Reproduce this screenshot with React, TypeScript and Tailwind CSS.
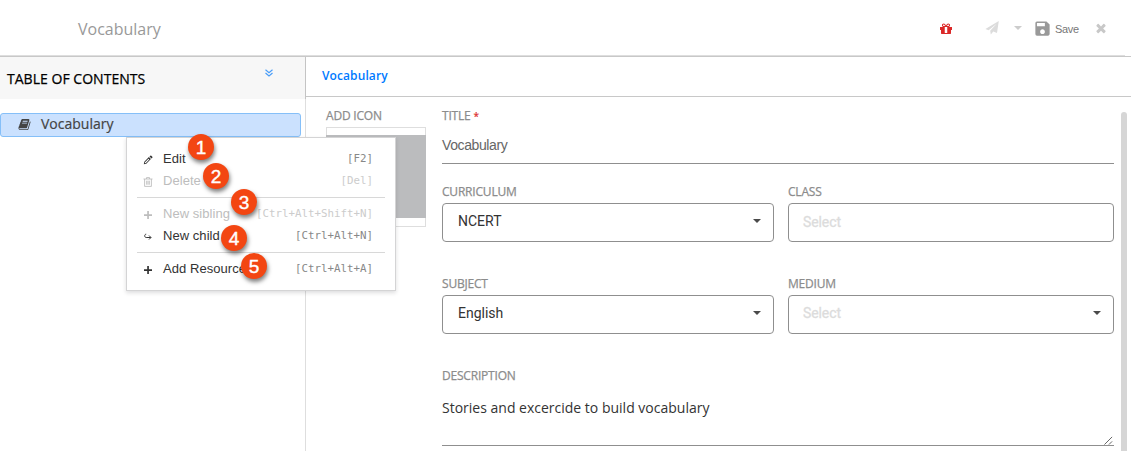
import type { ReactNode } from 'react';
import { MdSave } from 'react-icons/md';

const BOOK =
  'M1703 478q40 57 18 129l-275 906q-19 64-76.5 107.5t-122.500 43.500h-923q-77 0-148.500-53.500t-99.500-131.500q-24-67-2-127 0-4 3-27t4-37q1-8-3-21.500t-3-19.500q2-11 8-21t16.500-23.500 16.500-23.500q23-38 45-91.500t30-91.500q3-10 .5-30t-.5-28q3-11 17-28t17-23q21-36 42-92t25-90q1-9-2.500-32t.5-28q4-13 22-30.500t22-22.500q19-26 42.500-84.500t27.500-96.500q1-8-3-25.500t-2-26.500q2-8 9-18t18-23 17-21q8-12 16.500-30.500t15-35 16-36 19.500-32 26.500-23.500 36-11.500 47.500 5.500l-1 3q38-9 51-9h761q74 0 114 56t18 130l-274 906q-36 119-71.500 153.500t-128.500 34.500h-869q-27 0-38 15-11 16-1 43 24 70 144 70h923q29 0 56-15.500t35-41.500l300-987q7-22 5-57 38 15 59 43zm-1064 2q-4 13 2 22.500t20 9.500h608q13 0 25.500-9.500t16.500-22.500l21-64q4-13-2-22.500t-20-9.500h-608q-13 0-25.500 9.500t-16.500 22.500zm-83 256q-4 13 2 22.500t20 9.500h608q13 0 25.500-9.500t16.500-22.500l21-64q4-13-2-22.500t-20-9.500h-608q-13 0-25.500 9.500t-16.500 22.500z';
const GIFT =
  'M1056 1356v-716h-320v716q0 25 18 38.500t46 13.500h192q28 0 46-13.500t18-38.500zm-456-844h195l-126-161q-26-31-69-31-40 0-68 28t-28 68 28 68 68 28zm688-96q0-40-28-68t-68-28q-43 0-69 31l-125 161h194q40 0 68-28t28-68zm376 256v320q0 14-9 23t-23 9h-96v416q0 40-28 68t-68 28h-1088q-40 0-68-28t-28-68v-416h-96q-14 0-23-9t-9-23v-320q0-14 9-23t23-9h440q-93 0-158.500-65.500t-65.500-158.500 65.500-158.500 158.500-65.500q107 0 168 77l128 165 128-165q61-77 168-77 93 0 158.500 65.500t65.500 158.500-65.500 158.500-158.500 65.500h440q14 0 23 9t9 23z';
const CLOSE =
  'M1490 1322q0 40-28 68l-136 136q-28 28-68 28t-68-28l-294-294-294 294q-28 28-68 28t-68-28l-136-136q-28-28-28-68t28-68l294-294-294-294q-28-28-28-68t28-68l136-136q28-28 68-28t68 28l294 294 294-294q28-28 68-28t68 28l136 136q28 28 28 68t-28 68l-294 294 294 294q28 28 28 68z';

function Glyph({ d, className }: { d: string; className: string }) {
  return (
    <svg viewBox="0 0 1792 1792" fill="currentColor" className={className}>
      <path d={d} />
    </svg>
  );
}

function Label({ children, className = '' }: { children: ReactNode; className?: string }) {
  return (
    <div className={`flex h-4 items-center whitespace-nowrap font-['Open_Sans',sans-serif] text-[12px] leading-4 tracking-[-0.2px] text-[#8c8c8c] [-webkit-text-stroke:0.25px_#8c8c8c] ${className}`}>
      {children}
    </div>
  );
}

function Select({ value, placeholder = false, caret = true, className = '' }: { value: string; placeholder?: boolean; caret?: boolean; className?: string }) {
  return (
    <div className={`flex h-[39px] items-center justify-between rounded border border-[#8f8f8f] pr-3 font-[Roboto,sans-serif] text-[14px] leading-5 ${placeholder ? 'pl-[14px] tracking-[-0.1px] text-[#dcdcdc] [-webkit-text-stroke:0.3px_#dcdcdc]' : 'pl-[15px] text-[#333]'} ${className}`}>
      <span>{value}</span>
      {caret && (
        <svg viewBox="0 0 8 4" className="h-1 w-2" fill="#4a4a4a">
          <path d="M0 0h8L4 4z" />
        </svg>
      )}
    </div>
  );
}

function MenuItem({ icon, label, keys, disabled = false }: { icon: ReactNode; label: string; keys: string; disabled?: boolean }) {
  return (
    <div className={`flex h-[22px] items-center ${disabled ? 'text-[#bdbdbd]' : 'text-[#333]'}`}>
      <span className="mt-[2px] flex w-[26px] items-center pl-[6px]">{icon}</span>
      <span className="whitespace-nowrap text-[13px] leading-5 tracking-[0.05px]">{label}</span>
      <span className={`ml-auto mr-[12px] whitespace-nowrap font-['DejaVu_Sans_Mono',monospace] text-[10.8px] leading-5 ${disabled ? 'text-[#ccc]' : 'text-[#888]'}`}>
        {keys}
      </span>
    </div>
  );
}

function Plus() {
  return (
    <svg viewBox="0 0 10 10" className="size-[10px]" fill="currentColor">
      <path d="M4.200 1h1.700v3.200H9v1.700H5.900V9H4.200V5.900H1V4.200h3.200z" />
    </svg>
  );
}

function Badge({ n, className }: { n: number; className: string }) {
  return (
    <span className={`absolute flex size-[26px] items-center justify-center rounded-full bg-[#f34612] font-['Liberation_Sans',sans-serif] text-[19px] leading-none text-white shadow-[1px_3px_4px_rgba(0,0,0,0.5)] [-webkit-text-stroke:0.4px_white] ${className}`}>
      {n}
    </span>
  );
}

export default function App() {
  return (
    <div className="relative flex h-[451px] w-[1131px] flex-col overflow-hidden bg-white font-['Liberation_Sans',Arial,sans-serif]">
      <header className="flex h-[57px] shrink-0 flex-col">
        <div className="flex h-[55px] items-center pl-[78px]">
          <h1 className="mt-[3px] font-['Open_Sans',sans-serif] text-[16px] leading-6 text-[#999]">Vocabulary</h1>
          <div className="mt-[2px] mr-[23px] ml-auto flex items-center">
            <Glyph d={GIFT} className="size-[14px] text-[#db2828]" />
            <svg viewBox="0 0 14 14" className="mb-px ml-[32px] size-[14px]" fill="#dcdcdc">
              <path d="M13.800 0 L12 12 L8.300 10.500 L5.800 13.400 L5.200 9.800 L11.700 2.800 L3.600 9.300 L.4 8z" />
            </svg>
            <svg viewBox="0 0 8 4" className="mb-px ml-[15px] h-1 w-2" fill="#ccc">
              <path d="M0 0h8L4 4z" />
            </svg>
            <MdSave className="ml-[11px] size-[19px] text-[#999]" />
            <span className="ml-[3px] w-[24px] text-[11px] leading-4 tracking-[-0.3px] text-[#777]">Save</span>
            <Glyph d={CLOSE} className="mb-px ml-[15px] size-[14px] text-[#c8c8c8]" />
          </div>
        </div>
        <div className="mr-[6px] h-px bg-[#dedede]" />
        <div className="h-px bg-[#c8c8c8]" />
      </header>

      <div className="flex min-h-0 flex-1">
        <aside className="flex w-[306px] shrink-0 flex-col">
          <div className="flex h-[42px] shrink-0 items-center border-r border-[#c4c4c4] bg-[#f7f7f7] pl-[7px]">
            <h2 className="mt-px font-['Open_Sans',sans-serif] text-[14px] leading-5 tracking-[0.03px] text-black [-webkit-text-stroke:0.25px_black]">
              TABLE OF CONTENTS
            </h2>
            <svg viewBox="0 0 8 8" className="mr-[32px] mb-[10px] ml-auto size-2" fill="none" stroke="#4a9df8" strokeWidth="1.200">
              <path d="M.5 .8 4 3.700 7.500 .8M.5 4 4 6.900 7.500 4" />
            </svg>
          </div>
          <div className="flex-1 border-r border-[#dedede] pt-[14px] pr-1">
            <div className="flex h-6 items-center rounded-[3px] border border-[#85bff8] bg-[#cbe1fe] pl-[17px] text-[#444]">
              <Glyph d={BOOK} className="mb-px size-[13px]" />
              <span className="mb-[2px] ml-[10px] font-['Open_Sans',sans-serif] text-[14px] leading-5 [-webkit-text-stroke:0.2px_#444]">Vocabulary</span>
            </div>
          </div>
        </aside>

        <main className="flex min-w-0 flex-1 flex-col">
          <div className="flex h-10 shrink-0 items-center border-b border-[#c8c8c8] pb-px pl-4">
            <span className="font-['Open_Sans',sans-serif] text-[12px] leading-5 font-semibold tracking-[0.1px] text-[#007aff]">Vocabulary</span>
          </div>
          <div className="flex min-h-0 flex-1">
            <section className="w-[136px] shrink-0 pt-[11px] pl-5">
              <Label>ADD ICON</Label>
              <div className="mt-[3px] flex size-[100px] flex-col border border-[#dedede] pt-[7px]">
                <div className="-mx-px h-[83px] bg-[#bbbcbe]" />
              </div>
            </section>
            <section className="w-[672px] shrink-0 pt-[11px]">
              <Label>
                TITLE<span className="mb-px ml-[3px] text-[10px] text-[#db2828] [-webkit-text-stroke:0.2px_#db2828]">*</span>
              </Label>
              <div className="flex h-[40px] items-center border-b border-[#8f8f8f] pt-[3px] font-['Liberation_Sans',sans-serif] text-[14px] leading-5 tracking-[-0.4px] text-[#666]">
                Vocabulary
              </div>
              <div className="mt-5 grid grid-cols-[332px_326px] gap-x-[14px]">
                <Label>CURRICULUM</Label>
                <Label>CLASS</Label>
                <Select value="NCERT" className="mt-[3px] pb-[3px]" />
                <Select value="Select" placeholder caret={false} className="mt-[3px] pb-px" />
                <Label className="mt-[34px]">SUBJECT</Label>
                <Label className="mt-[34px]">MEDIUM</Label>
                <Select value="English" className="mt-[3px] pb-[3px]" />
                <Select value="Select" placeholder className="mt-[3px] pb-[3px]" />
              </div>
              <Label className="mt-[34px]">DESCRIPTION</Label>
              <div className="flex h-[62px] justify-between border-b border-[#8f8f8f] pt-[14px]">
                <span className="font-['Open_Sans',sans-serif] text-[14px] leading-5 text-[#333]">Stories and excercide to build vocabulary</span>
                <svg viewBox="0 0 10 10" className="mr-px size-[9px] self-end" fill="none" stroke="#555" strokeWidth="1">
                  <path d="M.5 9.500 9 1M5.500 9.500 9 6" />
                </svg>
              </div>
            </section>
            <div className="mt-[15px] ml-[7px] w-[6px] rounded-t-[3px] bg-[#d6d6d6]" />
          </div>
        </main>
      </div>

      <div className="absolute top-[137px] left-[126px] flex h-[154px] w-[270px] flex-col border border-[#d4d4d5] bg-white px-[10px] pt-[10px] shadow-[0_2px_4px_rgba(34,36,38,0.15)]">
        <MenuItem
          label="Edit"
          keys="[F2]"
          icon={
            <svg viewBox="0 0 10 10" className="size-[10px]" fill="currentColor">
              <path d="M.8 9.300 1.300 6.700 5.900 2.100 7.900 4.100 3.300 8.700zM2 7.200 1.900 8.200 2.900 8 6.300 4.500 5.500 3.700z" fillRule="evenodd" />
              <path d="M6.500 1.500 7.300.7q.5-.5 1 0l1 1q.5.5 0 1L8.500 3.500z" />
            </svg>
          }
        />
        <MenuItem
          disabled
          label="Delete"
          keys="[Del]"
          icon={
            <svg viewBox="0 0 10 10" className="size-[10px]" fill="none" stroke="currentColor">
              <path d="M.5 2h9M3.500 2V.6h3V2M1.600 2v7.400h6.800V2M3.700 3.700v4M5 3.700v4M6.300 3.700v4" strokeWidth=".9" />
            </svg>
          }
        />
        <div className="mt-[5px] mb-[5px] h-px shrink-0 bg-[#d8d8d8]" />
        <MenuItem disabled label="New sibling" keys="[Ctrl+Alt+Shift+N]" icon={<Plus />} />
        <MenuItem
          label="New child"
          keys="[Ctrl+Alt+N]"
          icon={
            <svg viewBox="0 0 10 10" className="size-[10px]" fill="none" stroke="currentColor" strokeWidth="1">
              <path d="M3.200 2.200C1.200 2.200 1.200 5.500 3.200 5.500h4.600M6 3.500 8 5.500 6 7.500" />
            </svg>
          }
        />
        <div className="mt-[5px] mb-[5px] h-px shrink-0 bg-[#d8d8d8]" />
        <MenuItem label="Add Resource" keys="[Ctrl+Alt+A]" icon={<Plus />} />
      </div>

      <Badge n={1} className="top-[134px] left-[188px]" />
      <Badge n={2} className="top-[163px] left-[203px]" />
      <Badge n={3} className="top-[189px] left-[231px]" />
      <Badge n={4} className="top-[225px] left-[221px]" />
      <Badge n={5} className="top-[253px] left-[241px]" />
    </div>
  );
}
